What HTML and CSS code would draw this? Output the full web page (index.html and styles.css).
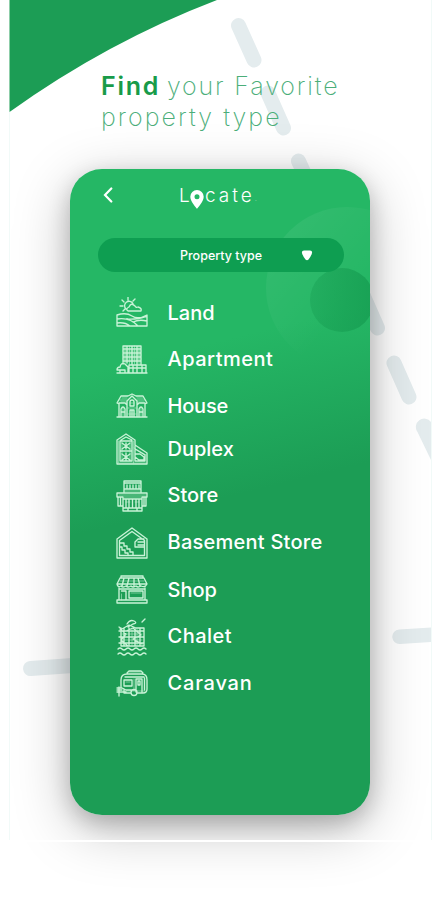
FILE: index.html
```html
<!DOCTYPE html>
<html lang="en">
<head>
<meta charset="utf-8">
<title>Locate</title>
<link rel="stylesheet" href="styles.css">
</head>
<body>
<main class="page">
  <svg class="backdrop" viewBox="0 0 439 900" aria-hidden="true">
    <path d="M9.500 0H217Q107 42 9.500 112Z" fill="#1c9d55"/>
    <path d="M9.500 112V840M431.500 0V840" stroke="#f1faf8" stroke-width="1"/>
    <g fill="none" stroke="#e4ecee" stroke-width="15" stroke-linecap="round">
      <path d="M238.500 25.500L254 60M268 93L283.500 128M298.500 161L314 195M362 293L377.500 328M394 363L409 397"/>
      <path d="M30.500 668.500L80 665"/>
    </g>
    <path d="M431 422A7.500 7.500 0 0 0 417.500 432L431 460ZM431 627.500L399 629.500A7.200 7.200 0 0 0 400 644L431 642Z" fill="#e4ecee"/>
  </svg>

  <h1 class="headline"><span class="line first"><b>Find</b> <span>your Favorite</span></span><span class="line second">property type</span></h1>

  <section class="phone">
    <svg class="glow" viewBox="0 0 300 646" aria-hidden="true">
      <defs>
        <linearGradient id="ring" x1="0" y1=".3" x2=".6" y2=".8"><stop offset="0" stop-color="#fff" stop-opacity=".06"/><stop offset=".75" stop-color="#fff" stop-opacity="0"/></linearGradient>
        <linearGradient id="disc" x1="0" y1="0" x2="1" y2="0"><stop offset="0" stop-color="#159b50" stop-opacity=".35"/><stop offset="1" stop-color="#159b50" stop-opacity=".75"/></linearGradient>
      </defs>
      <circle cx="277" cy="119" r="81" fill="url(#ring)"/>
      <circle cx="272" cy="131" r="32" fill="url(#disc)"/>
    </svg>

    <header class="bar">
      <svg class="back" viewBox="0 0 10 16"><path d="M8.300 1.500L2 8L8.300 14.500"/></svg>
      <div class="logo"><span>L</span><svg class="pin" viewBox="0 0 14 19"><path fill-rule="evenodd" d="M7 0A6.700 6.700 0 0 0 .3 6.700C.3 11.500 7 18.700 7 18.700S13.700 11.500 13.700 6.700A6.700 6.700 0 0 0 7 0ZM7 4.200A2.500 2.500 0 1 1 7 9.200A2.500 2.500 0 0 1 7 4.200Z"/></svg><span class="rest">cate</span><small>.</small></div>
    </header>

    <div class="select"><span>Property type</span>
      <svg viewBox="0 0 12 11"><path d="M3 .5H9Q11.500.5 11 3Q10.500 5.500 7.500 9.500Q6 11 4.500 9.500Q1.500 5.500 1 3Q.5.5 3 .5Z"/></svg>
    </div>

    <ul class="types">
      <li><svg viewBox="0 0 32 32"><path d="M10 12A4.500 4.500 0 1 1 17 6.500M12 0V3M6 3L8 5M4 9H7M19 2L17 4M7 14L9 12M12 14Q9 12 13 10Q15 5 19 9Q20 11 22 10Q26 11 25 14ZM1 18Q10 15 16 19T31 18V29H1ZM1 22Q14 20 22 29M1 26Q9 25 14 29M11 22Q20 23 31 19M17 25Q23 22 31 24"/></svg><span class="land">Land</span></li>
      <li><svg viewBox="0 0 32 32"><path d="M7 20V2H25V20M7 5H25M7 9H25M7 13H25M7 17H25M11 2V19M16 2V20M21 2V20M1 29H31M1 26Q1 23 4 23Q5 18 9 20L12 23V29M1 26H8M13 29V21H30V29M17 22V29M21 22V29M26 22V29M4 29V26H9V29M13 24H30"/><path class="fine" d="M7 7H25M7 11H25M7 15H25M9 2V19M13.500 2V20M18.500 2V20M23 2V20"/></svg><span class="apartment">Apartment</span></li>
      <li><svg viewBox="0 0 32 32"><path d="M3 27V14L1 13L5 6H12L16 4L20 6H27L31 13L29 14V27M1 27H31M3 13H9L11 15M29 13H23L21 15M11 27V11L16 6L21 11V27M14 27V20H18V27M16 10A2 2 0 0 1 18 12V16H14V12A2 2 0 0 1 16 10ZM5 26V19Q7 15 9 19V26M23 26V19Q25 15 27 19V26M5 22H9M23 22H27M16 20V27"/><path class="fine" d="M6 8H11M4 10H11M5 12H11M21 8H27M21 10H29M21 12H28M14 13H18M12 18H20M12 24H20M7 17V26M25 17V26"/></svg><span class="house">House</span></li>
      <li class="duplex-row"><svg viewBox="0 0 32 32"><path d="M1 31V7L10 1L19 7V12L31 20V31ZM4 28V8H16V28H4M4 18H16M19 13V28H29V22L19 16M5 7L10 4L16 7M6 10L10 13L14 10M6 16L10 13L14 16M6 21L10 24L14 21M6 27L10 24L14 27M10 10V16M10 20V28M19 21H24L28 24V27H23L19 24"/><path class="fine" d="M2.500 8V30M17.500 8V30M3 30H30M6 10V27M14 10V27M18 15L30 22"/></svg><span class="duplex">Duplex</span></li>
      <li><svg viewBox="0 0 32 32"><path d="M8 12V1H25V12M9 3H24M9 9H24M11 5V8M14 5V8M17 5V8M20 5V8M23 5V8M1 13H31V17H26V28H7V17H1ZM8 19H25M10 20V28M13 20V28M16.500 19V28M20 20V28M23 20V28M7 31H26V28H7ZM2 17V26H7M30 17V26H26M4.500 17V25M28 17V25M12 28V31M21 28V31"/><path class="fine" d="M9 11H24M3 15H30M8 17H25M10 22H14M19 22H23"/></svg><span class="store">Store</span></li>
      <li class="basement-row"><svg viewBox="0 0 32 32"><path d="M1 31V12L16 1L31 12V31ZM3.500 28.500V13.500L16 4.500L28.500 13.500V28.500ZM4 16H8V19H11V22H14V25H17V28M4 20H6V23H9V26H12V28M28 12H22L19 15V20H28M22 15H28M22 18H28"/></svg><span class="basement">Basement Store</span></li>
      <li class="shop-row"><svg viewBox="0 0 32 32"><path d="M5 4V2H27V4M4 4H28L31 10H1ZM1 10Q2 14 5 12Q7 14 10 12Q12 14 15 12Q17 14 20 12Q22 14 25 12Q29 14 31 10M8 4L6 12M13 4L11 12M18 4V12M22 4L24 12M3 14V26M29 14V26M1 26H31V29H1ZM5.500 17H10V26M13 17H27V24H13ZM4 15H28"/><path class="fine" d="M4 7H28M5.500 20V26M15 19H25"/></svg><span class="shop">Shop</span></li>
      <li><svg class="tall" viewBox="0 0 32 38"><path d="M11 6Q14 1 18 3Q22 5 17 6L12 9M26 4L29 1M3 9L6 11L13 7L20 10H28V28M5 10V28H28M3 13H28M3 19H28M3 25H28M8 10V28M13 10V28M19 11V28M24 11V28M4 11L10 16L5 22L12 28M10 13L17 10L25 17L17 21L26 26M2 31Q4 29 6 31T10 31T14 31T18 31T22 31T26 31T30 31M2 36Q4 34 6 36T10 36T14 36T18 36T22 36T26 36T30 36"/><path class="fine" d="M6 16H26M6 22H26M16 10V27M21 11V27"/></svg><span class="chalet">Chalet</span></li>
      <li><svg viewBox="0 0 32 32"><path d="M5 20V13Q5 7 11 7H26Q31 7 31 13V22Q31 26 27 26H22M15 26H8V22M11 6L13 4H25L27 6M8 13H16V19H8ZM20 25V12H26V25M22 14H24V18H22ZM1 21H6M1 25H10M3 20V29M1 23H6M28.500 11V23M6 21L10 23H19M9 10H28M15 25.500A3 3 0 1 0 21 25.500A3 3 0 1 0 15 25.500"/><path class="fine" d="M13 5H25M10 15H14M8 24H29M18 12V22"/></svg><span class="caravan">Caravan</span></li>
    </ul>
  </section>
  <div class="seam"></div>
</main>
</body>
</html>
```
FILE: styles.css
```css
* { box-sizing: border-box; }
body { margin: 0; background: #fff; font-family: Inter, "Liberation Sans", sans-serif; }
.page { position: relative; width: 439px; height: 900px; padding-top: 70px; overflow: hidden; }
.backdrop { position: absolute; inset: 0; width: 439px; height: 900px; }

.headline { position: relative; height: 99px; margin: 0 0 0 101px; padding-top: 1px; font-size: 25px; line-height: 31px; font-weight: 200; color: #4bae79; white-space: nowrap; }
.headline .line { display: block; }
.headline b { font-weight: 600; color: #189b49; letter-spacing: 1.7px; }
.headline span span { letter-spacing: 1.85px; }
.headline .second { letter-spacing: 2.05px; }

.phone { position: relative; width: 300px; height: 646px; margin-left: 70px; border-radius: 32px; background: linear-gradient(166deg, #25b765 0%, #25b765 29%, #1c9d55 51%, #1c9d55 100%); box-shadow: 0 8px 22px rgba(0,0,0,.2), 0 14px 56px rgba(0,0,0,.25); }
.glow { position: absolute; inset: 0; width: 300px; height: 646px; border-radius: 32px; overflow: hidden; }
.bar { position: relative; display: flex; align-items: flex-start; height: 69px; padding: 18px 0 0 33px; }
.back { width: 10px; height: 16px; fill: none; stroke: #fff; stroke-width: 2.2; stroke-linecap: round; }
.logo { display: flex; align-items: flex-start; margin: -1px 0 0 66px; color: #fff; font-size: 19px; line-height: 20px; font-weight: 300; letter-spacing: 1.7px; }
.logo .rest { letter-spacing: 3px; }
.pin { width: 14px; height: 19px; margin: 4px 1px 0 -1.5px; fill: #fff; }
.logo small { font-size: 8px; line-height: 24px; opacity: .5; }

.select { position: relative; display: flex; align-items: center; width: 246px; height: 34px; margin-left: 28px; padding: 0 31px 0 82px; justify-content: space-between; border-radius: 17px; background: #0e9e51; color: #fff; font-size: 12.5px; font-weight: 500; letter-spacing: 0; white-space: nowrap; }
.select svg { width: 12px; height: 11px; fill: #fff; }

.types { position: relative; display: flex; flex-direction: column; gap: 14.5px; list-style: none; margin: 25px 0 0; padding: 0 0 0 46px; }
.types li { display: flex; align-items: center; gap: 20px; height: 32px; color: #fff; font-size: 20px; font-weight: 500; line-height: 32px; white-space: nowrap; }
.types span { margin: -1px 0 0 -.5px; }
.types svg { flex: none; width: 32px; height: 32px; fill: none; stroke: #c9f3d7; stroke-width: 1.35; stroke-linejoin: round; stroke-linecap: round; }
.types .tall { height: 38px; }
.types .fine { stroke-width: .8; opacity: .65; }
.types .duplex-row { margin-top: -3.5px; }
.types .basement-row { margin-top: .5px; }
.types .shop-row { margin-top: 1px; }
.apartment { letter-spacing: .5px; }
.house { letter-spacing: -.2px; }
.basement { letter-spacing: .25px; }
.chalet { letter-spacing: .5px; }
.caravan { letter-spacing: .8px; }
.seam { position: absolute; left: 9px; top: 840px; width: 423px; height: 2px; background: #fff; }
```
